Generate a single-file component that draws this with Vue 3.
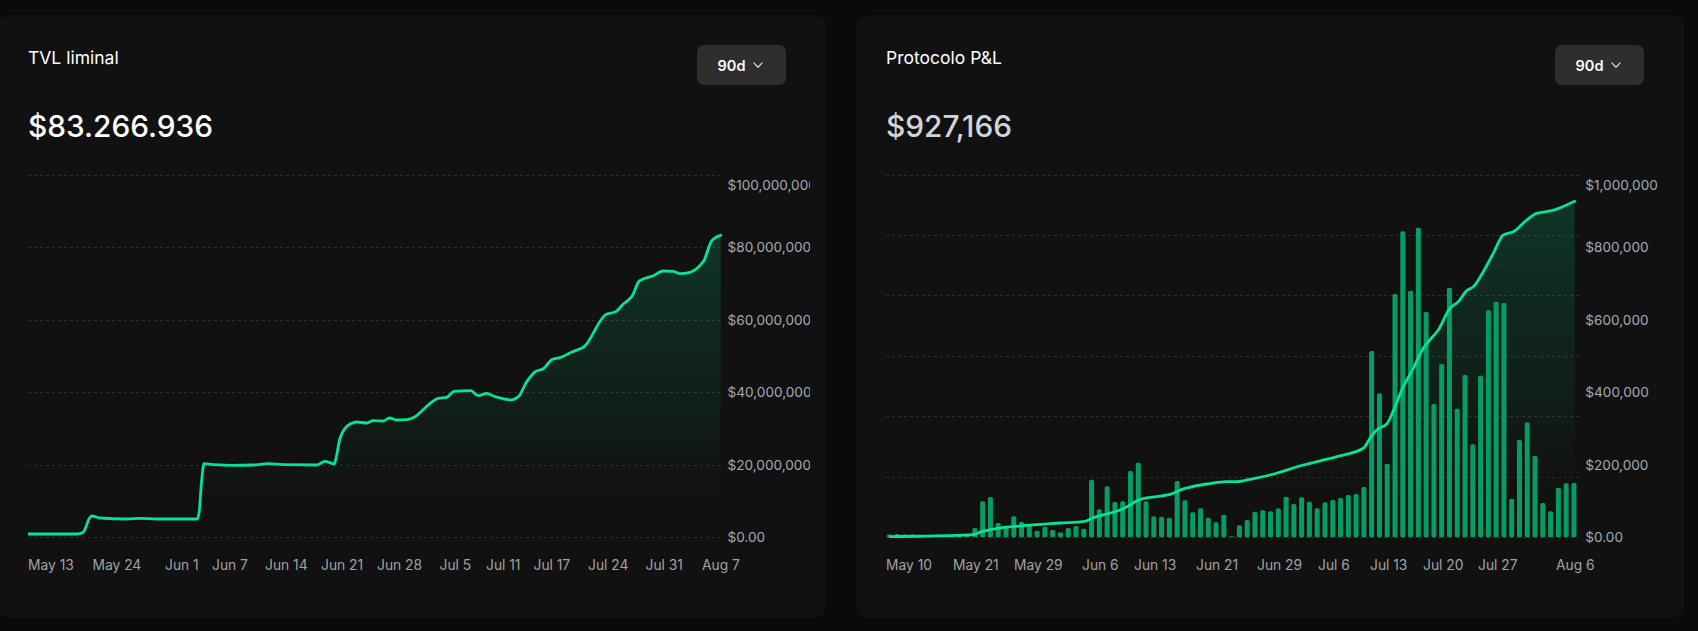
<template>
  <div class="page">
    <section v-for="chart in charts" :key="chart.title" class="card">
      <header class="head">
        <h2 class="title">{{ chart.title }}</h2>
        <button class="range" type="button">
          90d
          <svg class="chev" viewBox="0 0 10 6" aria-hidden="true">
            <path d="M.6.7 5 5.2 9.4.7" />
          </svg>
        </button>
      </header>

      <p class="value" :class="{ dim: chart.dim }">{{ chart.value }}</p>

      <svg class="plot" :viewBox="`${chart.left} 170 782 410`">
        <defs>
          <linearGradient :id="chart.gradId" x1="0" y1="0" x2="0" y2="1">
            <stop offset="0" stop-color="#05e396" stop-opacity="0.17" />
            <stop offset="0.88" stop-color="#05e396" stop-opacity="0" />
          </linearGradient>
        </defs>

        <line
          v-for="y in chart.grid"
          :key="y"
          class="grid"
          :x1="chart.left"
          :x2="chart.gridEnd"
          :y1="y"
          :y2="y"
        />

        <path :d="chart.area" :fill="`url(#${chart.gradId})`" />

        <rect
          v-for="bar in chart.bars"
          :key="bar.x"
          class="bar"
          :x="bar.x"
          :y="bar.y"
          :width="5"
          :height="bar.h"
          rx="1.6"
        />

        <path class="line" :d="chart.line" />

        <text
          v-for="tick in chart.yTicks"
          :key="tick.label"
          class="tick-y"
          :x="chart.axisX"
          :y="tick.y"
        >{{ tick.label }}</text>

        <text
          v-for="tick in chart.xTicks"
          :key="tick.label"
          class="tick-x"
          :x="tick.x"
          y="565"
        >{{ tick.label }}</text>
      </svg>
    </section>
  </div>
</template>

<script setup>
const BASE = 537.3

// same curve the chart lib uses, keeps steps from overshooting
function monotone(pts) {
  const n = pts.length
  const dx = []
  const slope = []
  for (let i = 0; i < n - 1; i++) {
    dx[i] = pts[i + 1][0] - pts[i][0]
    slope[i] = (pts[i + 1][1] - pts[i][1]) / dx[i]
  }
  const m = [slope[0]]
  for (let i = 1; i < n - 1; i++) {
    if (slope[i - 1] * slope[i] <= 0) {
      m[i] = 0
    } else {
      const a = (dx[i - 1] + 2 * dx[i]) / (3 * (dx[i - 1] + dx[i]))
      const b = (2 * dx[i - 1] + dx[i]) / (3 * (dx[i - 1] + dx[i]))
      m[i] = (slope[i - 1] * slope[i]) / (a * slope[i] + b * slope[i - 1])
    }
  }
  m[n - 1] = slope[n - 2]

  let d = `M${pts[0][0]} ${pts[0][1]}`
  for (let i = 0; i < n - 1; i++) {
    const h = dx[i] / 3
    d += `C${pts[i][0] + h} ${pts[i][1] + m[i] * h} ${pts[i + 1][0] - h} ${pts[i + 1][1] - m[i + 1] * h} ${pts[i + 1][0]} ${pts[i + 1][1]}`
  }
  return d
}

function buildArea(pts) {
  const last = pts[pts.length - 1][0]
  return `${monotone(pts)}L${last} ${BASE}L${pts[0][0]} ${BASE}Z`
}

const tvlPoints = [
  [28.3, 534], [76.7, 534], [83.3, 532.3], [86, 526.7], [89.3, 518.3], [91.7, 516], [100, 518],
  [126.7, 519], [140, 518.3], [156.7, 519], [197.3, 519], [199, 513.3], [201.7, 480], [204, 463.7],
  [213.3, 464.7], [233.3, 465.3], [253.3, 465], [268.3, 463.7], [283.3, 464.7], [316.7, 465],
  [325, 461.3], [334.3, 464], [336.7, 455], [340, 438.3], [345, 428.3], [350, 424], [356.7, 422],
  [366.7, 423], [373.3, 420.7], [383.3, 421], [389.3, 418], [396.7, 420], [406.7, 419.7], [415, 416.7],
  [423.3, 409.5], [438.3, 398.3], [446.7, 397.3], [454, 391.3], [470.7, 390.7], [478.3, 395.7],
  [486.7, 393.3], [495, 396.7], [511.7, 400], [518.3, 396.7], [526.7, 381.7], [536, 371.3],
  [543.3, 368.7], [552.3, 359.3], [560, 357.7], [571.7, 352], [583.3, 347.3], [606.7, 314], [615, 312],
  [623.3, 304], [631.7, 296.7], [639.3, 281], [653.3, 275.7], [663.3, 271], [673.3, 271.3], [680, 273.7],
  [690, 272.3], [703.3, 261.7], [711.7, 240.7], [716, 237.3], [720.7, 235.3]
]

const pnlPoints = [
  [890, 536.7], [973.3, 534.7], [981.7, 531.7], [991.7, 529.3], [1020, 526], [1060, 523], [1085, 521.3],
  [1093.3, 517.7], [1120, 510], [1130, 505], [1140, 499.3], [1170, 494.3], [1185, 488.3], [1206.7, 484],
  [1226.7, 481.7], [1236.7, 481.7], [1250, 479.3], [1270, 475], [1303.3, 465], [1336.7, 456.7],
  [1363.3, 448.3], [1370, 438.3], [1376.7, 430], [1386.7, 424], [1394, 409.3], [1403.3, 386.7],
  [1413.3, 368.3], [1423.3, 348.3], [1428.3, 341.7], [1438.3, 330], [1450, 308.3], [1458.3, 301.7],
  [1466.7, 290.7], [1473.3, 286.7], [1483.3, 271.7], [1493.3, 253.3], [1503.3, 235], [1513.3, 231.7],
  [1526.7, 220], [1536.7, 213.3], [1551.7, 210.7], [1574.7, 201.3]
]

const barTops = [
  534.3, 534, 534.3, 534.3, 535, 535.3, 535.7, 535.7, 535.7, 535.7, 535.3, 528, 501.3, 497, 523, 525.7,
  516.3, 521.7, 525, 530.7, 526.7, 530, 532.3, 528, 526, 528.7, 479.7, 509.3, 486.3, 502, 501.3, 471,
  462.7, 501.3, 516.3, 516.7, 517.7, 481, 500.3, 512.3, 508.3, 517.7, 522.3, 514.7, 536.3, 525.3, 520,
  511.7, 510.3, 511.3, 508.3, 496.7, 504, 497.3, 501.7, 508.3, 502.3, 500, 498, 495, 494, 487, 351,
  393.3, 463.7, 294, 231.3, 290.7, 227.7, 312, 404, 364, 287.7, 408.7, 375, 444.3, 375.7, 310.3, 301.7,
  303, 498.7, 440, 422.3, 456, 503, 511.3, 487.7, 483.3, 483
]

const bars = barTops.map((y, i) => ({
  x: 889.3 + i * 7.78 - 2.5,
  y,
  h: BASE - y
}))

const charts = [
  {
    title: 'TVL liminal',
    value: '$83.266.936',
    gradId: 'tvl-fill',
    left: 28,
    gridEnd: 721.5,
    axisX: 727.5,
    grid: [175.5, 247.5, 320.5, 392.5, 465.5, 537.5],
    line: monotone(tvlPoints),
    area: buildArea(tvlPoints),
    bars: [],
    yTicks: [
      { label: '$100,000,000', y: 185 },
      { label: '$80,000,000', y: 247.3 },
      { label: '$60,000,000', y: 320 },
      { label: '$40,000,000', y: 392.3 },
      { label: '$20,000,000', y: 465 },
      { label: '$0.00', y: 537.3 }
    ],
    xTicks: [
      { label: 'May 13', x: 28 },
      { label: 'May 24', x: 92.5 },
      { label: 'Jun 1', x: 165 },
      { label: 'Jun 7', x: 212 },
      { label: 'Jun 14', x: 265 },
      { label: 'Jun 21', x: 321 },
      { label: 'Jun 28', x: 377 },
      { label: 'Jul 5', x: 439.5 },
      { label: 'Jul 11', x: 486 },
      { label: 'Jul 17', x: 533.5 },
      { label: 'Jul 24', x: 588 },
      { label: 'Jul 31', x: 645.5 },
      { label: 'Aug 7', x: 702 }
    ]
  },
  {
    title: 'Protocolo P&L',
    value: '$927,166',
    dim: true,
    gradId: 'pnl-fill',
    left: 886,
    gridEnd: 1579,
    axisX: 1585.3,
    grid: [175.5, 235.5, 295.5, 356.5, 416.5, 477.5, 537.5],
    line: monotone(pnlPoints),
    area: buildArea(pnlPoints),
    bars,
    yTicks: [
      { label: '$1,000,000', y: 185 },
      { label: '$800,000', y: 247.3 },
      { label: '$600,000', y: 320 },
      { label: '$400,000', y: 392.3 },
      { label: '$200,000', y: 465 },
      { label: '$0.00', y: 537.3 }
    ],
    xTicks: [
      { label: 'May 10', x: 886 },
      { label: 'May 21', x: 953 },
      { label: 'May 29', x: 1014 },
      { label: 'Jun 6', x: 1082 },
      { label: 'Jun 13', x: 1134 },
      { label: 'Jun 21', x: 1196 },
      { label: 'Jun 29', x: 1257 },
      { label: 'Jul 6', x: 1318 },
      { label: 'Jul 13', x: 1370 },
      { label: 'Jul 20', x: 1423 },
      { label: 'Jul 27', x: 1478 },
      { label: 'Aug 6', x: 1556 }
    ]
  }
]
</script>

<style scoped>
.page {
  display: grid;
  grid-template-columns: 828px 828px;
  gap: 30px;
  margin-left: -2px;
  padding-top: 15px;
  font-family: Inter, "Noto Sans", sans-serif;
}

.card {
  background: #111111;
  border-radius: 12px;
  padding: 30px 40px 38px 30px;
  height: 603px;
  box-sizing: border-box;
}

.head {
  display: flex;
  justify-content: space-between;
  align-items: flex-start;
  height: 40px;
}

.title {
  margin: 1px 0 0;
  font-size: 17.5px;
  line-height: 24px;
  font-weight: 400;
  color: #ffffff;
}

.range {
  display: flex;
  align-items: center;
  justify-content: center;
  gap: 8px;
  width: 89px;
  height: 40px;
  padding: 0 2px 0 0;
  border: 0;
  border-radius: 7px;
  background: #2e2e2e;
  color: #ffffff;
  font: 600 14.5px Inter, sans-serif;
}

.chev {
  width: 10px;
  height: 6px;
  fill: none;
  stroke: #e5e5e5;
  stroke-width: 1.2;
}

.value {
  margin: 23px 0 0;
  font-size: 29.8px;
  line-height: 36px;
  font-weight: 450;
  color: #ffffff;
}

.value.dim {
  color: #d1d5db;
}

.plot {
  display: block;
  width: 782px;
  height: 410px;
  margin-top: 26px;
}

.grid {
  stroke: #2e2e2e;
  stroke-width: 1;
  stroke-dasharray: 3 3;
}

.bar {
  fill: #059c68;
}

.line {
  fill: none;
  stroke: #05e396;
  stroke-width: 2.8;
  stroke-linejoin: round;
  stroke-linecap: round;
}

.tick-y,
.tick-x {
  dominant-baseline: central;
}

.tick-y {
  font-size: 13.6px;
  fill: #a3a9b5;
}

.tick-x {
  font-size: 13.8px;
  fill: #a3a3a3;
}
</style>

<style>
html,
body {
  background: #0a0a0a;
  overflow: hidden;
}
</style>
